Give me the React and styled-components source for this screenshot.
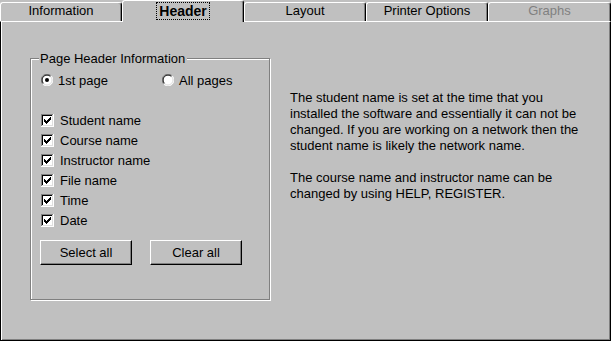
import styled, { createGlobalStyle } from 'styled-components';

const GlobalStyle = createGlobalStyle`
  html, body {
    margin: 0;
    padding: 0;
    background: #c0c0c0;
  }
`;

const Window = styled.div`
  width: 611px;
  height: 341px;
  background: #c0c0c0;
  display: flex;
  flex-direction: column;
  font-family: 'Liberation Sans', Arial, sans-serif;
  font-size: 13px;
  color: #000;
  overflow: hidden;
`;

const TabStrip = styled.div`
  display: flex;
  align-items: flex-end;
  height: 21px;
  flex: none;
  position: relative;
  z-index: 2;
`;

const Tab = styled.div`
  flex: ${({ $last }) => ($last ? '1 1 auto' : '0 0 122px')};
  height: ${({ $active }) => ($active ? 22 : 19)}px;
  margin-bottom: ${({ $active }) => ($active ? -1 : 0)}px;
  box-sizing: border-box;
  display: flex;
  align-items: center;
  justify-content: center;
  background: #c0c0c0;
  border-top: 1px solid #fff;
  border-left: 1px solid #fff;
  border-right: 1px solid #000;
  border-radius: 3px 3px 0 0;
  box-shadow: inset -1px 0 0 #808080;
  padding-bottom: ${({ $active }) => ($active ? 1 : 3)}px;
  color: ${({ $disabled }) => ($disabled ? '#808080' : '#000')};
  font-weight: ${({ $active }) => ($active ? 700 : 400)};
  font-size: ${({ $active }) => ($active ? 14 : 13)}px;
`;

const FocusLabel = styled.span`
  outline: 1px dotted #000;
  outline-offset: 0;
  padding: 1px 2px 0;
  line-height: 15px;
`;

const Panel = styled.div`
  flex: 1;
  display: flex;
  align-items: flex-start;
  box-sizing: border-box;
  border-top: 1px solid #fff;
  border-left: 1px solid #000;
  border-right: 1px solid #000;
  border-bottom: 1px solid #000;
  box-shadow: inset 1px 0 0 #fff, inset -1px -1px 0 #808080;
  padding: 36px 0 0 29px;
  position: relative;
  z-index: 1;
`;

const GroupBox = styled.div`
  position: relative;
  width: 240px;
  height: 242px;
  box-sizing: border-box;
  border: 1px solid #808080;
  box-shadow: 1px 1px 0 #fff, inset 1px 1px 0 #fff;
  padding: 11px 0 0 10px;
  flex: none;
`;

const Legend = styled.span`
  position: absolute;
  top: -8px;
  left: 8px;
  padding: 0 2px 0 1px;
  background: #c0c0c0;
  line-height: 15px;
`;

const RadioRow = styled.div`
  display: flex;
  height: 20px;
  margin-bottom: 20px;
`;

const RadioItem = styled.label`
  display: flex;
  align-items: center;
  gap: 5px;
  width: ${({ $width }) => $width}px;
`;

const CheckList = styled.div`
  display: flex;
  flex-direction: column;
`;

const CheckItem = styled.label`
  display: flex;
  align-items: center;
  gap: 6px;
  height: 20px;
`;

const ButtonRow = styled.div`
  display: flex;
  gap: 18px;
  margin: 10px 0 0 -1px;
`;

const Button = styled.button`
  width: 92px;
  height: 25px;
  box-sizing: border-box;
  background: #c0c0c0;
  font: inherit;
  color: #000;
  border: 1px solid;
  border-color: #fff #000 #000 #fff;
  box-shadow: inset -1px -1px 0 #808080;
  padding: 0;
`;

const InfoText = styled.div`
  margin: 32px 0 0 20px;
  line-height: 16px;
  white-space: nowrap;
`;

const Paragraph = styled.p`
  margin: 0 0 16px;
`;

const CheckBox = () => (
  <svg width="13" height="13" viewBox="0 0 13 13" shapeRendering="crispEdges">
    <rect x="0" y="0" width="13" height="13" fill="#fff" />
    <rect x="0" y="0" width="12" height="1" fill="#808080" />
    <rect x="0" y="0" width="1" height="12" fill="#808080" />
    <rect x="1" y="1" width="10" height="1" fill="#000" />
    <rect x="1" y="1" width="1" height="10" fill="#000" />
    <rect x="1" y="11" width="11" height="1" fill="#dfdfdf" />
    <rect x="11" y="1" width="1" height="11" fill="#dfdfdf" />
    <g fill="#000">
      <rect x="9" y="3" width="1" height="1" />
      <rect x="8" y="4" width="2" height="1" />
      <rect x="3" y="5" width="1" height="1" />
      <rect x="7" y="5" width="3" height="1" />
      <rect x="3" y="6" width="2" height="1" />
      <rect x="6" y="6" width="3" height="1" />
      <rect x="3" y="7" width="5" height="1" />
      <rect x="4" y="8" width="3" height="1" />
      <rect x="5" y="9" width="1" height="1" />
    </g>
  </svg>
);

const Radio = ({ checked }) => (
  <svg width="12" height="12" viewBox="0 0 12 12">
    <circle cx="6" cy="6" r="5.5" fill="#fff" />
    <path d="M10.2 1.8 A5.5 5.5 0 0 0 1.8 10.2" fill="none" stroke="#808080" strokeWidth="1" />
    <path d="M9.5 2.5 A4.5 4.5 0 0 0 2.5 9.5" fill="none" stroke="#000" strokeWidth="1" />
    <path d="M1.8 10.2 A5.5 5.5 0 0 0 10.2 1.8" fill="none" stroke="#fff" strokeWidth="1" />
    <path d="M2.5 9.5 A4.5 4.5 0 0 0 9.5 2.5" fill="none" stroke="#dfdfdf" strokeWidth="1" />
    {checked && <circle cx="6" cy="6" r="2" fill="#000" />}
  </svg>
);

const tabs = [
  { label: 'Information' },
  { label: 'Header', active: true },
  { label: 'Layout' },
  { label: 'Printer Options' },
  { label: 'Graphs', disabled: true },
];

const fields = ['Student name', 'Course name', 'Instructor name', 'File name', 'Time', 'Date'];

const App = () => (
  <>
    <GlobalStyle />
    <Window>
      <TabStrip>
        {tabs.map((tab, i) => (
          <Tab
            key={tab.label}
            $active={tab.active}
            $disabled={tab.disabled}
            $last={i === tabs.length - 1}
          >
            {tab.active ? <FocusLabel>{tab.label}</FocusLabel> : tab.label}
          </Tab>
        ))}
      </TabStrip>
      <Panel>
        <GroupBox>
          <Legend>Page Header Information</Legend>
          <RadioRow>
            <RadioItem $width={121}>
              <Radio checked />
              1st page
            </RadioItem>
            <RadioItem $width={100}>
              <Radio />
              All pages
            </RadioItem>
          </RadioRow>
          <CheckList>
            {fields.map((f) => (
              <CheckItem key={f}>
                <CheckBox />
                {f}
              </CheckItem>
            ))}
          </CheckList>
          <ButtonRow>
            <Button>Select all</Button>
            <Button>Clear all</Button>
          </ButtonRow>
        </GroupBox>
        <InfoText>
          <Paragraph>
            The student name is set at the time that you
            <br />
            installed the software and essentially it can not be
            <br />
            changed. If you are working on a network then the
            <br />
            student name is likely the network name.
          </Paragraph>
          <Paragraph>
            The course name and instructor name can be
            <br />
            changed by using HELP, REGISTER.
          </Paragraph>
        </InfoText>
      </Panel>
    </Window>
  </>
);

export default App;
